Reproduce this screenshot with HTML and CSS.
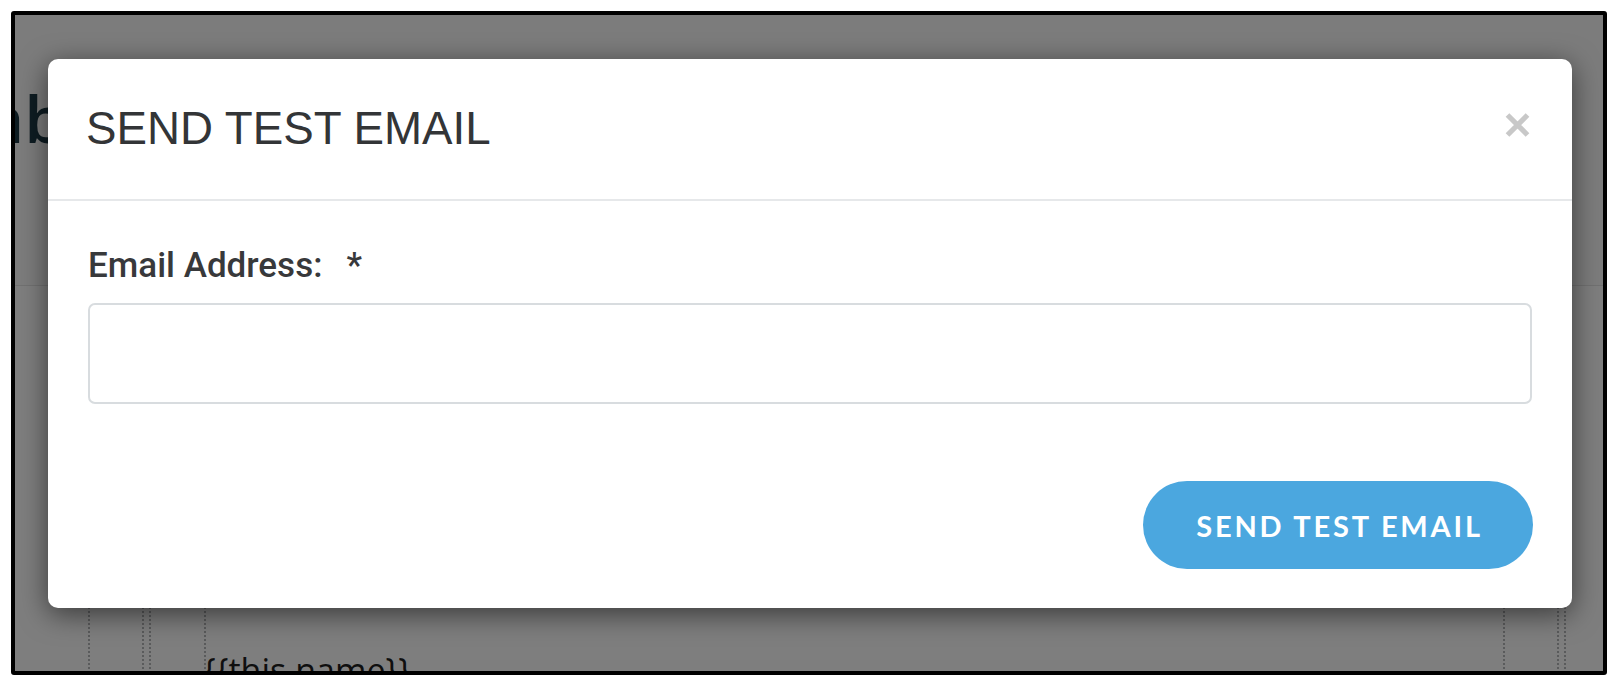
FILE: index.html
```html
<!DOCTYPE html>
<html lang="en">
<head>
<meta charset="utf-8">
<title>Send Test Email</title>
<link rel="stylesheet" href="styles.css">
</head>
<body>
<div class="frame">
  <div class="page">
    <header class="page-header">
      <h1 class="page-title">ab</h1>
    </header>
    <main class="page-main">
      <div class="box b0">
        <div class="box b1">
          <div class="box b2">
            <div class="box b3">
              <p class="tpl">{{this.name}}</p>
            </div>
          </div>
        </div>
      </div>
    </main>
  </div>

  <div class="backdrop">
    <div class="modal" role="dialog" aria-labelledby="modal-title">
      <div class="modal-header">
        <h2 class="modal-title" id="modal-title">SEND TEST EMAIL</h2>
        <button class="close" type="button" aria-label="Close">
          <svg width="25" height="24" viewBox="0 0 25 24" aria-hidden="true">
            <path d="M2.5 2 L22.5 22 M22.5 2 L2.5 22" stroke="#c8c8c8" stroke-width="5.2" fill="none"/>
          </svg>
        </button>
      </div>
      <div class="modal-body">
        <label class="field-label" for="email">Email Address:<span class="req">*</span></label>
        <input class="field-input" id="email" type="email">
      </div>
      <div class="modal-footer">
        <button class="btn-send" type="button">SEND TEST EMAIL</button>
      </div>
    </div>
  </div>
</div>
</body>
</html>
```
FILE: styles.css
```css
html, body {
  margin: 0;
  padding: 0;
  background: #ffffff;
}

.frame {
  position: relative;
  box-sizing: border-box;
  width: 1596px;
  height: 664px;
  margin: 11px 13px 0 11px;
  border: 4px solid #000;
  border-radius: 3px;
  overflow: hidden;
  background: #fdfdfd;
}

/* underlying page */
.page {
  height: 100%;
}

.page-header {
  box-sizing: border-box;
  height: 271px;
  padding-top: 69px;
  background: #f8f8f8;
  border-bottom: 1px solid #e2e2e2;
}

.page-title {
  margin: 0 0 0 -29px;
  font-family: "Open Sans", sans-serif;
  font-weight: 600;
  font-size: 66px;
  line-height: 66px;
  color: #1c3945;
  white-space: nowrap;
}

.page-main {
  padding-top: 274px;
}

.box {
  box-sizing: border-box;
  height: 200px;
}

.b0 {
  margin-left: 73px;
  border-left: 2px dotted #b5b7b9;
}

.b1 {
  margin-left: 52px;
  margin-right: 37px;
  border-left: 2px dotted #b5b7b9;
  border-right: 2px dotted #b5b7b9;
}

.b2 {
  margin-left: 5px;
  margin-right: 5px;
  border-left: 2px dotted #b5b7b9;
  border-right: 2px dotted #b5b7b9;
}

.b3 {
  margin-left: 53px;
  margin-right: 52px;
  padding-top: 87px;
  border-left: 2px dotted #b5b7b9;
  border-right: 2px dotted #b5b7b9;
}

.tpl {
  margin: 0 0 0 -3px;
  font-family: "Open Sans", sans-serif;
  font-size: 34px;
  color: #1e1e1e;
  white-space: nowrap;
}

/* modal */
.backdrop {
  position: absolute;
  inset: 0;
  background: rgba(0, 0, 0, 0.5);
  padding: 44px 31px 0 33px;
}

.modal {
  background: #ffffff;
  border-radius: 10px;
  box-shadow: 0 6px 28px rgba(0, 0, 0, 0.55);
}

.modal-header {
  display: flex;
  justify-content: space-between;
  align-items: flex-start;
  padding: 44px 42px 44px 38px;
  border-bottom: 2px solid #e6e8ea;
}

.modal-title {
  margin: 0;
  font-family: "Liberation Sans", Arial, sans-serif;
  font-weight: 400;
  font-size: 45.7px;
  line-height: 52px;
  color: #333537;
}

.close {
  margin: 10px 0 0 0;
  padding: 0;
  border: 0;
  background: none;
  width: 25px;
  height: 24px;
  line-height: 0;
  cursor: pointer;
}

.modal-body {
  padding: 45px 40px 0 40px;
}

.field-label {
  display: block;
  margin-bottom: 17px;
  font-family: Roboto, sans-serif;
  font-weight: 500;
  font-size: 35px;
  line-height: 40px;
  color: #38393b;
}

.req {
  margin-left: 24px;
}

.field-input {
  display: block;
  box-sizing: border-box;
  width: 100%;
  height: 101px;
  margin: 0;
  border: 2px solid #d8dcdf;
  border-radius: 7px;
  background: #ffffff;
  outline: none;
}

.modal-footer {
  display: flex;
  justify-content: flex-end;
  padding: 77px 39px 39px 40px;
}

.btn-send {
  box-sizing: border-box;
  width: 390px;
  height: 88px;
  padding: 0 0 0 3px;
  border: 0;
  border-radius: 44px;
  background: #4ba7df;
  color: #ffffff;
  font-family: Lato, sans-serif;
  font-weight: 700;
  font-size: 29px;
  letter-spacing: 2.8px;
  cursor: pointer;
}
```
